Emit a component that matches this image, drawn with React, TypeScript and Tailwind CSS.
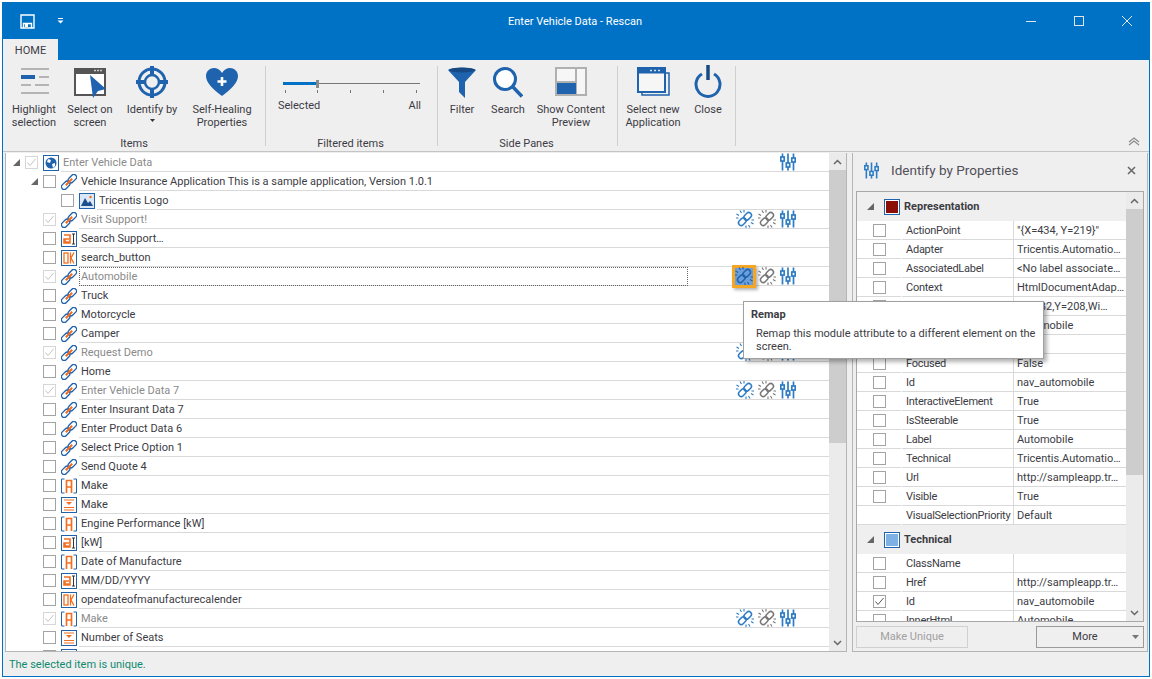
import React from "react";

const B = "#1f62ad";
const O = "#f26f21";

function LinkGlyph() {
  return (
    <g transform="rotate(-45 8 8)" fill="none">
      <rect x="-1.5" y="5.3" width="9.5" height="5.4" rx="2.7" stroke={B} strokeWidth="1.3" />
      <rect x="8" y="5.3" width="9.5" height="5.4" rx="2.7" stroke={B} strokeWidth="1.3" />
      <path d="M3.500 8H12.500" stroke={O} strokeWidth="2.200" />
    </g>
  );
}

function Icon({ kind }: { kind: string }) {
  if (kind === "link")
    return (
      <svg width="16" height="16" viewBox="0 0 16 16">
        <LinkGlyph />
      </svg>
    );
  if (kind === "globe")
    return (
      <svg width="16" height="16" viewBox="0 0 16 16">
        <rect x="0.5" y="0.5" width="15" height="15" fill="#fff" stroke={B} />
        <circle cx="8" cy="8" r="5.5" fill={B} />
        <path d="M5 4l3 1-1 3-3-1zM9 9l3-1 0 3-2 2z" fill="#fff" />
      </svg>
    );
  if (kind === "image")
    return (
      <svg width="16" height="16" viewBox="0 0 16 16">
        <rect x="0" y="0" width="16" height="16" fill="#dbe7f5" />
        <rect x="0.5" y="0.5" width="15" height="15" fill="none" stroke={B} />
        <path d="M2 13 L6 5 L9 10 L11 8 L14 13 Z" fill="#1c4f8f" />
        <circle cx="11.5" cy="4" r="1.2" fill={O} />
      </svg>
    );
  if (kind === "text")
    return (
      <svg width="16" height="16" viewBox="0 0 16 16">
        <rect x="0.5" y="0.5" width="15" height="15" fill="#fff" stroke={B} />
        <path d="M3 4h6v8H3V8h5M4 8v3h4" fill="none" stroke={O} strokeWidth="1.6" />
        <path d="M11 3h3M12.500 3v10M11 13h3" fill="none" stroke="#333" strokeWidth="1" />
      </svg>
    );
  if (kind === "ok")
    return (
      <svg width="16" height="16" viewBox="0 0 16 16">
        <rect x="0.5" y="0.5" width="15" height="15" fill="#fff" stroke={B} />
        <rect x="3" y="3" width="4" height="10" fill="none" stroke={O} strokeWidth="1.3" />
        <path d="M9.500 2.500v11M13 2.500L10 8l3 5.500" fill="none" stroke={O} strokeWidth="1.3" />
      </svg>
    );
  if (kind === "label")
    return (
      <svg width="16" height="16" viewBox="0 0 16 16">
        <path d="M3.500 1H.5v14h3M12.500 1h3v14h-3" fill="none" stroke={B} />
        <path d="M5.500 15V2.500h5V15M5.500 9h5" fill="none" stroke={O} strokeWidth="1.7" />
      </svg>
    );
  return (
    <svg width="16" height="16" viewBox="0 0 16 16">
      <rect x="0.5" y="0.5" width="15" height="15" fill="#fff" stroke={B} />
      <path d="M3 3h10M3 10.500h10M3 13h10" fill="none" stroke={O} strokeWidth="1" />
      <path d="M5 5h6l-3 3z" fill={O} />
    </svg>
  );
}

function Sliders({ size = 16 }: { size?: number }) {
  return (
    <svg width={size} height={Math.round(size * 1.1)} viewBox="0 0 16 18" fill="none" stroke="#2e7cc4" strokeWidth="1.7">
      <path d="M2.500 0.5v17M8 0.5v17M13.500 0.5v17" />
      <rect x="0.8" y="4" width="3.4" height="4" fill="#fff" />
      <rect x="6.3" y="10" width="3.4" height="4" fill="#fff" />
      <rect x="11.800" y="5" width="3.4" height="4" fill="#fff" />
    </svg>
  );
}

function Broken({ color = "#2e7cc4" }: { color?: string }) {
  return (
    <svg width="18" height="18" viewBox="0 0 18 18" fill="none" stroke={color}>
      <g transform="rotate(-45 9 9)" strokeWidth="1.5">
        <rect x="1" y="6.300" width="8.500" height="5.400" rx="2.700" />
        <rect x="8.500" y="6.300" width="8.500" height="5.400" rx="2.700" />
      </g>
      <path d="M4 0.5l1.500 2.500M0.500 4l2.500 1.500M8 0v2.500M14 17.500L12.500 15M17.500 14L15 12.500M10 18v-2.500M0 8h2.500M18 10h-2.500" strokeWidth="1.100" />
    </svg>
  );
}

function Check({ on, dim }: { on?: boolean; dim?: boolean }) {
  return (
    <span
      className={
        "flex h-[13px] w-[13px] shrink-0 items-center justify-center border bg-white " +
        (dim ? "border-[#d6d6d6]" : "border-[#a3a3a3]")
      }
    >
      {on && (
        <svg width="11" height="11" viewBox="0 0 11 11" fill="none" stroke={dim ? "#c4c4c4" : "#555"} strokeWidth="1">
          <path d="M1.500 5.500 L4 8.500 L9.500 2" />
        </svg>
      )}
    </span>
  );
}

type Row = { t: string; i: string; d?: number; on?: boolean; a?: number; exp?: boolean; focus?: boolean };

const rows: Row[] = [
  { t: "Enter Vehicle Data", i: "globe", d: 0, on: true, a: 1, exp: true },
  { t: "Vehicle Insurance Application This is a sample application, Version 1.0.1", i: "link", d: 1, exp: true },
  { t: "Tricentis Logo", i: "image", d: 2 },
  { t: "Visit Support!", i: "link", on: true, a: 3 },
  { t: "Search Support…", i: "text" },
  { t: "search_button", i: "ok" },
  { t: "Automobile", i: "link", on: true, a: 3, focus: true },
  { t: "Truck", i: "link" },
  { t: "Motorcycle", i: "link" },
  { t: "Camper", i: "link" },
  { t: "Request Demo", i: "link", on: true, a: 3 },
  { t: "Home", i: "link" },
  { t: "Enter Vehicle Data 7", i: "link", on: true, a: 3 },
  { t: "Enter Insurant Data 7", i: "link" },
  { t: "Enter Product Data 6", i: "link" },
  { t: "Select Price Option 1", i: "link" },
  { t: "Send Quote 4", i: "link" },
  { t: "Make", i: "label" },
  { t: "Make", i: "drop" },
  { t: "Engine Performance [kW]", i: "label" },
  { t: "[kW]", i: "text" },
  { t: "Date of Manufacture", i: "label" },
  { t: "MM/DD/YYYY", i: "text" },
  { t: "opendateofmanufacturecalender", i: "ok" },
  { t: "Make", i: "label", on: true, a: 3 },
  { t: "Number of Seats", i: "drop" },
  { t: "", i: "drop" },
];

function Tri() {
  return (
    <svg width="7" height="7" viewBox="0 0 7 7">
      <path d="M7 0V7H0Z" fill="#666" />
    </svg>
  );
}

function TreeRow({ r }: { r: Row }) {
  const d = r.d ?? 1;
  const pad = d === 0 ? "pl-[19px]" : d === 1 ? "pl-[37px]" : "pl-[55px]";
  const triLeft = d === 0 ? "left-[7px]" : "left-[25px]";
  return (
    <div className={"relative flex h-[19px] shrink-0 items-center " + pad}>
      {r.exp && (
        <span className={"absolute top-[6px] " + triLeft}>
          <Tri />
        </span>
      )}
      <Check on={r.on} dim={r.on} />
      <span className="ml-[5px] shrink-0">
        <Icon kind={r.i} />
      </span>
      <div className="ml-[2px] flex h-[19px] flex-1 items-center border-b border-[#d9d9d9] pr-[33px]">
        <span
          className={
            "whitespace-nowrap " +
            (r.on ? "text-[#8a8a8a] " : "text-[#3c3c44] ") +
            (r.focus
              ? "h-[19px] w-[609px] shrink-0 border border-dotted border-[#666] pl-[1px] leading-[17px]"
              : "pt-[2px] pl-[2px]")
          }
        >
          {r.t}
        </span>
        {r.a && (
          <div className="ml-auto flex items-center gap-[4px]">
            {r.a === 3 &&
              (r.focus ? (
                <span className="-mr-[2px] -ml-[3px] flex h-[23px] w-[24px] items-center justify-center border-[3px] border-[#f5a623] bg-[#6d9fdb] shadow-[2px_2px_3px_rgba(0,0,0,0.3)]">
                  <Broken color="#1f62ad" />
                </span>
              ) : (
                <Broken />
              ))}
            {r.a === 3 && <Broken color="#777" />}
            <Sliders />
          </div>
        )}
      </div>
    </div>
  );
}

function RibbonItem({ w, icon, lines, caret }: { w: string; icon: React.ReactNode; lines: string[]; caret?: boolean }) {
  return (
    <div className={"flex shrink-0 flex-col items-center " + w}>
      <div className="flex h-[37px] items-start justify-center">{icon}</div>
      <div className="text-center leading-[13px] whitespace-nowrap">
        {lines.map((l) => (
          <div key={l}>{l}</div>
        ))}
        {caret && (
          <svg className="mx-auto mt-[3px]" width="5" height="3" viewBox="0 0 5 3">
            <path d="M0 0h5L2.500 3z" fill="#333" />
          </svg>
        )}
      </div>
    </div>
  );
}

function Sep() {
  return <div className="mt-[6px] h-[80px] w-px shrink-0 bg-[#cfcfcf]" />;
}

function Group({ w, label, children }: { w: string; label: string; children: React.ReactNode }) {
  return (
    <div className={"flex shrink-0 flex-col pt-[6px] " + w}>
      <div className="flex h-[71px]">{children}</div>
      <div className="h-[14px] text-center leading-[14px]">{label}</div>
    </div>
  );
}

const props: [string, string, boolean?][] = [
  ["ActionPoint", '"{X=434, Y=219}"'],
  ["Adapter", "Tricentis.Automatio…"],
  ["AssociatedLabel", "<No label associate…"],
  ["Context", "HtmlDocumentAdap…"],
  ["BoundingRect", "{X=382,Y=208,Wi…"],
  ["InnerText", "Automobile"],
  ["Enabled", "True"],
  ["Focused", "False"],
  ["Id", "nav_automobile"],
  ["InteractiveElement", "True"],
  ["IsSteerable", "True"],
  ["Label", "Automobile"],
  ["Technical", "Tricentis.Automatio…"],
  ["Url", "http://sampleapp.tr…"],
  ["Visible", "True"],
];

const tech: [string, string, boolean?][] = [
  ["ClassName", ""],
  ["Href", "http://sampleapp.tr…"],
  ["Id", "nav_automobile", true],
  ["InnerHtml", "Automobile"],
];

function PropRow({ n, v, on, noBox }: { n: string; v: string; on?: boolean; noBox?: boolean }) {
  return (
    <div className="flex h-[19px] shrink-0 items-stretch bg-white">
      <div className="flex w-[44px] shrink-0 items-center justify-end border-b border-[#d9d9d9] pr-[15px]">
        {!noBox && <Check on={on} />}
      </div>
      <div className="ml-[1px] flex w-[112px] shrink-0 items-center border-r border-b border-[#d9d9d9] pt-[2px] pl-[4px] tracking-[-0.25px] whitespace-nowrap">
        {n}
      </div>
      <div className="flex flex-1 items-center overflow-hidden border-b border-[#d9d9d9] pt-[2px] pl-[3px] whitespace-nowrap">
        {v}
      </div>
    </div>
  );
}

function SectionHead({ t, color }: { t: string; color: string }) {
  return (
    <div className="flex h-[29px] shrink-0 items-center bg-[#efefef] pl-[10px]">
      <Tri />
      <span className="ml-[10px] flex h-[16px] w-[16px] items-center justify-center border border-[#1f62ad] bg-white">
        <span className={"h-[12px] w-[12px] " + color} />
      </span>
      <span className="ml-[4px] pt-[1px] font-bold">{t}</span>
    </div>
  );
}

function ScrollBar({ thumb }: { thumb: string }) {
  return (
    <div className="flex w-[17px] shrink-0 flex-col bg-[#ebebeb]">
      <div className="flex h-[17px] shrink-0 items-center justify-center">
        <svg width="9" height="6" viewBox="0 0 9 6" fill="none" stroke="#666" strokeWidth="1.500">
          <path d="M1 5l3.500-3.500L8 5" />
        </svg>
      </div>
      <div className={"bg-[#cdcdcd] " + thumb} />
      <div className="flex-1" />
      <div className="flex h-[17px] shrink-0 items-center justify-center">
        <svg width="9" height="6" viewBox="0 0 9 6" fill="none" stroke="#666" strokeWidth="1.500">
          <path d="M1 1l3.500 3.500L8 1" />
        </svg>
      </div>
    </div>
  );
}

export default function App() {
  return (
    <div
      className="h-[679px] w-[1152px] overflow-hidden bg-white p-[2px] text-[11px] text-[#3c3c44]"
      style={{ fontFamily: 'Roboto,"Noto Sans",sans-serif' }}
    >
      <div className="relative flex h-[675px] w-[1148px] flex-col border border-[#0072c6] bg-[#f0eff0]">
        {/* title bar */}
        <div className="flex h-[57px] shrink-0 flex-col bg-[#0072c6]">
          <div className="flex h-[36px] shrink-0 items-center pl-[17px]">
            <svg width="15" height="15" viewBox="0 0 15 15" fill="none" stroke="#fff">
              <path d="M1 1h13v13H1zM3.500 14V9.500h8V14" strokeWidth="1.4" />
              <rect x="5" y="10" width="3" height="3" fill="#fff" stroke="none" />
            </svg>
            <svg className="ml-[22px]" width="7" height="6" viewBox="0 0 7 6">
              <path d="M1 0.5h5" stroke="#fff" />
              <path d="M0.5 2.500h6L3.500 5.500z" fill="#fff" />
            </svg>
            <div className="flex-1 pt-[2px] pl-[60px] text-center text-white">Enter Vehicle Data - Rescan</div>
            <svg className="mr-[16px]" width="107" height="14" viewBox="0 0 107 14" fill="none" stroke="#dfe6ee">
              <path d="M0 7.500h10" />
              <rect x="48.500" y="2.500" width="9" height="9" />
              <path d="M96 2l10 10M106 2L96 12" />
            </svg>
          </div>
          <div className="flex h-[21px] w-[55px] items-center justify-center bg-[#f0eff0] pt-[3px]">HOME</div>
        </div>

        {/* ribbon */}
        <div className="relative flex h-[92px] shrink-0 border-b border-[#c4c4c4]">
          <Group w="w-[262px] pr-[2px] pl-[2px]" label="Items">
            <RibbonItem
              w="w-[58px]"
              lines={["Highlight", "selection"]}
              icon={
                <svg width="30" height="30" viewBox="0 0 30 30" className="mt-[1px]">
                  <path d="M2 2h28M20 10h10M2 18h10M16 18h14M2 26h28" stroke="#b5b5b5" strokeWidth="2" />
                  <rect x="2" y="8" width="14" height="4" fill={B} />
                </svg>
              }
            />
            <RibbonItem
              w="w-[54px]"
              lines={["Select on", "screen"]}
              icon={
                <svg width="34" height="32" viewBox="0 0 34 32" className="mt-[1px]">
                  <rect x="2" y="2" width="30" height="26" fill="#fff" stroke="#555" strokeWidth="2" />
                  <rect x="2" y="2" width="30" height="5" fill="#555" />
                  <path d="M24 3.500h2M27 3.500h2M21 3.500h2" stroke="#ccc" strokeWidth="1.5" />
                  <path d="M17 8 L33 22 L25 24 L20 31 Z" fill={B} />
                </svg>
              }
            />
            <RibbonItem
              w="w-[70px]"
              lines={["Identify by"]}
              caret
              icon={
                <svg width="32" height="32" viewBox="0 0 32 32" fill="none" stroke={B}>
                  <circle cx="16" cy="16" r="13" strokeWidth="3" />
                  <circle cx="16" cy="16" r="7" strokeWidth="2.5" />
                  <path d="M16 0v10M16 22v10M0 16h10M22 16h10" strokeWidth="4" />
                </svg>
              }
            />
            <RibbonItem
              w="w-[70px]"
              lines={["Self-Healing", "Properties"]}
              icon={
                <svg width="34" height="30" viewBox="0 0 34 30" className="mt-[1px]">
                  <path d="M17 29 C8 22 1 16 1 9 C1 4 5 1 9 1 C12 1 15 2.500 17 6 C19 2.500 22 1 25 1 C29 1 33 4 33 9 C33 16 26 22 17 29Z" fill={B} />
                  <path d="M17 10v9M12.500 14.500h9" stroke="#fff" strokeWidth="2.6" />
                </svg>
              }
            />
          </Group>
          <Sep />
          <Group w="w-[171px] pr-[2px]" label="Filtered items">
            <div className="flex w-full flex-col pt-[12px] pr-[15px] pl-[17px]">
              <div className="relative h-[14px] w-[137px]">
                <div className="absolute top-[5px] h-px w-[137px] bg-[#777]" />
                <div className="absolute top-[4px] h-[3px] w-[34px] bg-[#0072c6]" />
                <div className="absolute top-[2px] left-[33px] h-[8px] w-[3px] bg-[#8a8a8a]" />
                <svg className="absolute top-[12px] left-0" width="137" height="4" viewBox="0 0 137 4">
                  <path d="M2.500 0v3M34.500 0v3M67.500 0v3M100.500 0v3M133.500 0v3" stroke="#777" />
                </svg>
              </div>
              <div className="mt-[5px] flex justify-between pt-[2px] leading-[13px]">
                <span className="-ml-[5px]">Selected</span>
                <span className="mr-[-1px]">All</span>
              </div>
            </div>
          </Group>
          <Sep />
          <Group w="w-[179px] pr-[3px] pl-[1px]" label="Side Panes">
            <RibbonItem
              w="w-[46px]"
              lines={["Filter"]}
              icon={
                <svg width="28" height="31" viewBox="0 0 28 31" className="mt-[1px]">
                  <path d="M0 3 C4 0 24 0 28 3 L17 15 V31 L11 25 V15Z" fill={B} />
                  <ellipse cx="14" cy="3" rx="13" ry="2.600" fill="#174a85" />
                </svg>
              }
            />
            <RibbonItem
              w="w-[46px]"
              lines={["Search"]}
              icon={
                <svg width="30" height="31" viewBox="0 0 30 31" fill="none" stroke={B} className="mt-[1px]">
                  <circle cx="12" cy="12" r="10.500" strokeWidth="3" fill="#fff" />
                  <path d="M20 20 L29 29.500" strokeWidth="3.400" />
                </svg>
              }
            />
            <RibbonItem
              w="w-[80px]"
              lines={["Show Content", "Preview"]}
              icon={
                <svg width="32" height="29" viewBox="0 0 32 29" className="mt-[1px]">
                  <rect x="1" y="1" width="30" height="27" fill="#f6f6f6" stroke="#b0b0b0" strokeWidth="2" />
                  <path d="M21 1v27M1 15h20" stroke="#b0b0b0" strokeWidth="2" />
                  <rect x="2" y="16" width="19" height="11" fill={B} />
                </svg>
              }
            />
          </Group>
          <Sep />
          <Group w="w-[117px]" label="">
            <RibbonItem
              w="w-[70px]"
              lines={["Select new", "Application"]}
              icon={
                <svg width="33" height="29" viewBox="0 0 33 29" fill="none" stroke={B} className="mt-[1px]">
                  <path d="M29 6h3v22H5v-2" strokeWidth="1.500" />
                  <rect x="1" y="1" width="27" height="24" strokeWidth="2" fill="#f6f6f6" />
                  <rect x="1" y="1" width="27" height="5" fill={B} />
                  <path d="M13 3.500h2M17 3.500h2M21 3.500h2" stroke="#cfe0f2" strokeWidth="1.500" />
                </svg>
              }
            />
            <RibbonItem
              w="w-[40px]"
              lines={["Close"]}
              icon={
                <svg width="28" height="33" viewBox="0 0 28 33" fill="none" stroke={B} className="-mt-[1px]">
                  <path d="M8 9 A12 12 0 1 0 20 9" strokeWidth="3" />
                  <path d="M14 0v15" stroke="#174a85" strokeWidth="3.500" />
                </svg>
              }
            />
          </Group>
          <Sep />
          <svg className="absolute right-[9px] bottom-[5px]" width="12" height="9" viewBox="0 0 12 9" fill="none" stroke="#8a8a8a" strokeWidth="1.200">
            <path d="M1 5l5-4 5 4M1 8l5-4 5 4" />
          </svg>
        </div>

        {/* main */}
        <div className="flex min-h-0 flex-1 pt-[1px] pr-[1px] pl-[2px]">
          <div className="flex min-w-0 flex-1 border-x border-b border-[#b5b5b5]">
            <div className="flex min-w-0 flex-1 flex-col overflow-hidden bg-white">
              {rows.map((r, i) => (
                <TreeRow key={i} r={r} />
              ))}
            </div>
            <ScrollBar thumb="h-[273px]" />
          </div>
          <div className="w-[5px] shrink-0" />
          {/* right panel */}
          <div className="flex w-[296px] shrink-0 flex-col border-x border-b border-[#b5b5b5] px-[3px]">
            <div className="flex h-[38px] shrink-0 items-center pr-[8px] pb-[4px] pl-[8px]">
              <Sliders size={15} />
              <span className="ml-[12px] text-[13.5px] text-[#505058]">Identify by Properties</span>
              <svg className="ml-auto" width="9" height="9" viewBox="0 0 9 9" stroke="#666" strokeWidth="1.500">
                <path d="M1 1l7 7M8 1L1 8" />
              </svg>
            </div>
            <div className="flex h-[431px] shrink-0 overflow-hidden border border-[#a8a8a8] bg-white">
              <div className="flex min-w-0 flex-1 flex-col overflow-hidden">
                <SectionHead t="Representation" color="bg-[#8c0f05]" />
                {props.map((p) => (
                  <PropRow key={p[0]} n={p[0]} v={p[1]} />
                ))}
                <PropRow n="VisualSelectionPriority" v="Default" noBox />
                <SectionHead t="Technical" color="bg-[#7fb0e3]" />
                {tech.map((p) => (
                  <PropRow key={p[0]} n={p[0]} v={p[1]} on={p[2]} />
                ))}
              </div>
              <ScrollBar thumb="h-[266px]" />
            </div>
            <div className="mt-[4px] flex justify-between">
              <div className="flex h-[22px] w-[112px] items-center justify-center border border-[#d0d0d0] text-[#a0a0a0]">Make Unique</div>
              <div className="relative flex h-[22px] w-[108px] items-center justify-center border border-[#9a9a9a] pr-[10px]">
                More
                <svg className="absolute top-[8px] right-[4px]" width="7" height="4" viewBox="0 0 7 4">
                  <path d="M0 0h7L3.500 4z" fill="#777" />
                </svg>
              </div>
            </div>
          </div>
        </div>

        {/* status */}
        <div className="flex h-[24px] shrink-0 items-center pt-[3px] pl-[6px] text-[#0e8a6e]">The selected item is unique.</div>

        {/* tooltip */}
        <div className="absolute top-[298px] left-[740px] z-10 h-[58px] w-[301px] border border-[#a0a0a0] bg-white px-[7px] pt-[5px] shadow-[3px_3px_4px_rgba(0,0,0,0.3)]">
          <div className="leading-[15px] font-bold">Remap</div>
          <div className="mt-[5px] pl-[5px] leading-[13px]">
            Remap this module attribute to a different element on the
            <br />
            screen.
          </div>
        </div>
      </div>
    </div>
  );
}
